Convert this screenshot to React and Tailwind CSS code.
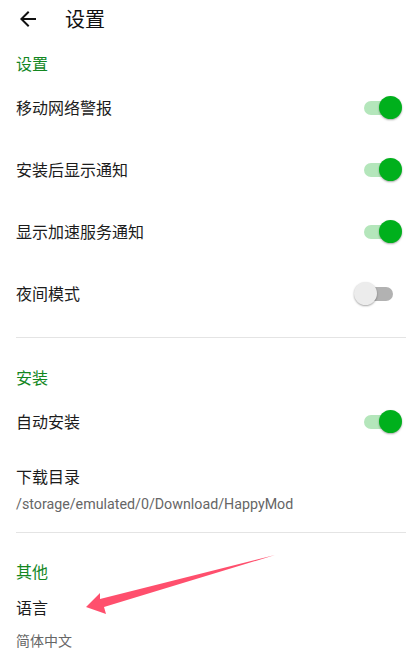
import React from "react";

const font = { fontFamily: '"Roboto", "Noto Sans CJK SC", sans-serif' };

function Toggle({ on }) {
  return (
    <div className="relative w-[48px] h-[24px] mr-[13px] shrink-0">
      <div className={`absolute left-[10px] top-[5px] w-[29px] h-[14px] rounded-full ${on ? "bg-[#b4e6bb]" : "bg-[#b2b2b2]"}`} />
      <div
        className={`absolute top-0 w-[23px] h-[23px] rounded-full shadow-[0_1px_2px_rgba(0,0,0,0.35)] ${on ? "left-[25px] bg-[#00b01c]" : "left-0 bg-[#ececec]"}`}
      />
    </div>
  );
}

function SwitchRow({ label, on }) {
  return (
    <div className="h-[62px] flex items-center justify-between pl-4">
      <span className="text-[16px] leading-6 text-[#1c1c1c] mt-[2px]">{label}</span>
      <Toggle on={on} />
    </div>
  );
}

function SectionLabel({ children, className = "" }) {
  return <div className={`pl-4 text-[16px] leading-6 text-[#13871f] ${className}`}>{children}</div>;
}

export default function App() {
  return (
    <div className="relative w-[415px] h-[670px] bg-white overflow-hidden" style={font}>
      {/* toolbar */}
      <div className="h-[40px] flex items-center pl-4">
        <svg className="w-6 h-6 mt-[-2px]" viewBox="0 0 24 24" fill="#111">
          <path d="M20 11H7.83l5.59-5.59L12 4l-8 8 8 8 1.41-1.41L7.83 13H20v-2z" />
        </svg>
        <span className="ml-[25px] text-[20px] leading-7 text-[#111] mt-[-1px]">设置</span>
      </div>

      <SectionLabel className="pt-[13px]">设置</SectionLabel>
      <SwitchRow label="移动网络警报" on />
      <SwitchRow label="安装后显示通知" on />
      <SwitchRow label="显示加速服务通知" on />
      <SwitchRow label="夜间模式" on={false} />

      <div className="mt-[12px] ml-4 mr-[9px] border-t border-[#e4e4e4]" />

      <SectionLabel className="pt-[29px]">安装</SectionLabel>
      <SwitchRow label="自动安装" on />

      <div className="pl-4 pt-[13px] pb-[18px]">
        <div className="text-[16px] leading-6 text-[#1c1c1c]">下载目录</div>
        <div className="mt-[4px] text-[14.25px] leading-5 text-[#666]">/storage/emulated/0/Download/HappyMod</div>
      </div>

      <div className="ml-4 mr-[9px] border-t border-[#e4e4e4]" />

      <SectionLabel className="pt-[28px]">其他</SectionLabel>
      <div className="pl-4 mt-[12px] text-[16px] leading-6 text-[#1c1c1c]">语言</div>
      <div className="pl-4 mt-[10px] text-[14px] leading-5 text-[#666]">简体中文</div>

      {/* annotation arrow */}
      <svg className="absolute left-0 top-0 pointer-events-none" width="415" height="670" viewBox="0 0 415 670">
        <polygon points="86,607 100,593 100,599 275,555 104,607 106,614" fill="#ff4f6d" />
      </svg>
    </div>
  );
}
